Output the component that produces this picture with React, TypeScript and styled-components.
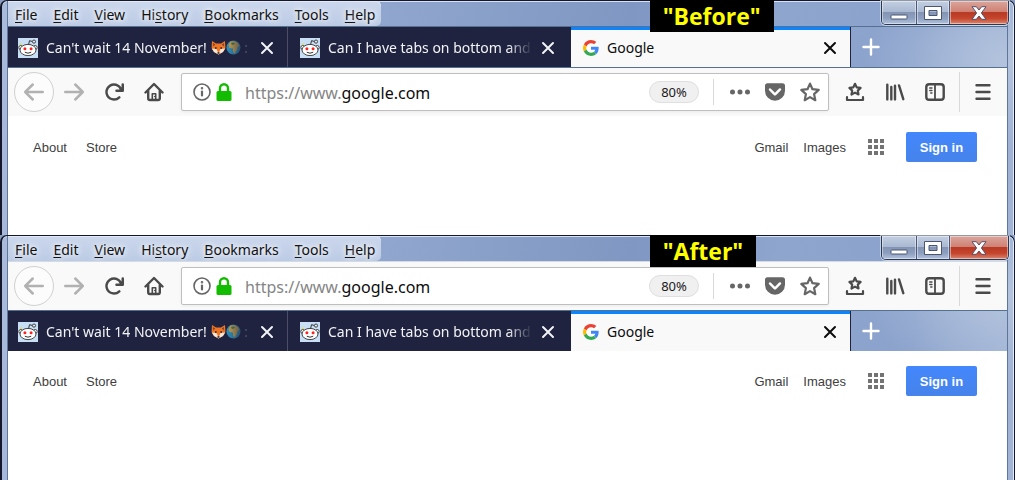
import React from "react";
import styled, { createGlobalStyle, css } from "styled-components";

const ui = `"Noto Sans", "Open Sans", sans-serif`;
const web = `"Liberation Sans", Arial, sans-serif`;

const GlobalStyle = createGlobalStyle`
  *, *::before, *::after { box-sizing: border-box; }
  html, body { margin: 0; padding: 0; height: 100%; background: #fff; }
  body { overflow: hidden; font-family: ${ui}; }
  #root { height: 100%; }
  button, input { font: inherit; margin: 0; }
`;

const Page = styled.main`
  display: flex;
  flex-direction: column;
  min-height: 100%;
  background: #8a9cc0;
`;

const Window = styled.section<{ $grow?: boolean }>`
  position: relative;
  flex: ${(p) => (p.$grow ? "1 0 auto" : "none")};
  display: flex;
  flex-direction: column;
  padding: 0 6px 0 5px;
  border: solid #14182a;
  border-width: 1px 1px 0 2px;
  border-radius: 7px 7px 0 0;
  background:
    radial-gradient(ellipse 150px 90px at 100% 60px, #b4c4de 0, rgba(180, 196, 222, 0) 100%),
    linear-gradient(100deg, #a9badb 0, #8fa5cd 38%, #7f97c2 60%, #8ea5ce 74%, #8ba2cc 88%, #a3b5d6 100%);
  box-shadow: inset 0 1px 0 #d8e1f1, inset -1px 0 0 #e4ebf6;
`;

const Client = styled.div`
  flex: 1 0 auto;
  display: flex;
  flex-direction: column;
  border: solid #5d7699;
  border-width: 0 1px;
`;

const Caption = styled.h2`
  position: absolute;
  top: -1px;
  left: 64%;
  z-index: 2;
  margin: 0;
  height: 32px;
  padding: 0 13px;
  background: #000;
  color: #ff0;
  font: 700 23px/32px "Open Sans", sans-serif;
`;

const TitleBar = styled.header`
  display: flex;
  justify-content: space-between;
  align-items: flex-start;
  height: 25px;
`;

const MenuBar = styled.nav`
  display: flex;
  align-items: center;
  gap: 16px;
  height: 25px;
  padding: 2px 6px 0 7px;
  border-radius: 0 5px 5px 0;
  background: linear-gradient(#cbd7ec, #bccbe5);
  box-shadow: inset 0 1px 0 #e3eaf6;
`;

const MenuItem = styled.button`
  padding: 0;
  border: 0;
  background: none;
  color: #101010;
  font-size: 14px;
  line-height: 20px;
  text-shadow: 0 0 5px #fff, 0 0 8px #fff;
  u { text-underline-offset: 2px; }
`;

const CaptionButtons = styled.div`
  display: flex;
  height: 24px;
  margin-right: -2px;
  border: 1px solid #2c3850;
  border-top: 0;
  border-radius: 0 0 5px 5px;
  overflow: hidden;
  box-shadow: 0 0 0 1px rgba(230, 238, 250, 0.6);
`;

const CaptionButton = styled.button<{ $close?: boolean }>`
  display: grid;
  place-items: center;
  width: ${(p) => (p.$close ? "59px" : "33px")};
  padding: 0;
  border: 0;
  border-left: 1px solid #4a5977;
  box-shadow: inset 0 0 0 1px rgba(255, 255, 255, 0.45);
  background: ${(p) =>
    p.$close
      ? "linear-gradient(#dba59c 0, #cf8274 46%, #b93a25 50%, #c4452b 75%, #d98672 100%)"
      : "linear-gradient(#c3cfe2 0, #aab9d2 46%, #8494b3 50%, #8d9fc0 75%, #b3c2dc 100%)"};
  &:first-child { border-left: 0; width: 34px; }
`;

const Divider = styled.div<{ $light?: boolean }>`
  height: 1px;
  background: ${(p) => (p.$light ? "#d5dbe3" : "#56708f")};
`;

const TabStrip = styled.div`
  display: flex;
  height: 40px;
`;

const Tab = styled.div<{ $active?: boolean; $first?: boolean }>`
  display: flex;
  align-items: center;
  flex: 0 1 ${(p) => (p.$first || p.$active ? "280px" : "283px")};
  min-width: 0;
  padding: 1px ${(p) => (p.$first || p.$active ? "12px" : "15px")} 0 ${(p) => (p.$first ? "10px" : "12px")};
  background: #20233f;
  color: #f2f3f7;
  ${(p) => p.$first && css`border-right: 1px solid #4c4e66;`}
  ${(p) =>
    p.$active &&
    css`
      background: #f9f9fa;
      color: #0c0c0d;
      border-right: 1px solid #20233f;
      box-shadow: inset 0 3px 0 #0a84ff;
    `}
`;

const TabLabel = styled.button`
  display: flex;
  align-items: center;
  flex: 1;
  min-width: 0;
  gap: 8px;
  padding: 0;
  border: 0;
  background: none;
  color: inherit;
  font-size: 14px;
  line-height: 22px;
`;

const TabTitle = styled.span<{ $fade?: boolean }>`
  flex: 1;
  display: flex;
  align-items: center;
  min-width: 0;
  overflow: hidden;
  white-space: pre;
  text-align: left;
  ${(p) => p.$fade && css`mask-image: linear-gradient(to left, transparent 0, #000 24px);`}
`;

const TabClose = styled.button`
  display: grid;
  place-items: center;
  width: 16px;
  height: 16px;
  margin-left: 8px;
  padding: 0;
  border: 0;
  background: none;
  color: inherit;
`;

const NewTab = styled.button`
  display: grid;
  place-items: center;
  width: 40px;
  padding: 0;
  border: 0;
  background: none;
  color: #fff;
`;

const Toolbar = styled.div`
  display: flex;
  align-items: center;
  height: 48px;
  padding: 0 4px 0 6px;
  background: #f9f9fa;
  color: #4a4a4b;
`;

const ToolButton = styled.button<{ $round?: boolean; $dim?: boolean }>`
  display: grid;
  place-items: center;
  flex: none;
  width: 40px;
  height: 40px;
  padding: 0;
  border: ${(p) => (p.$round ? "1px solid #d0d0d1" : "0")};
  border-radius: ${(p) => (p.$round ? "50%" : "2px")};
  background: ${(p) => (p.$round ? "#fcfcfc" : "none")};
  color: ${(p) => (p.$dim ? "#b1b1b2" : "inherit")};
`;

const AddressBar = styled.form`
  display: flex;
  align-items: center;
  flex: 1;
  min-width: 0;
  height: 38px;
  margin: 0 6px 0 7px;
  padding: 0 1px 0 9px;
  border: 1px solid #bfbfc0;
  border-radius: 2px;
  background: #fff;
  box-shadow: 0 1px 3px rgba(0, 0, 0, 0.06);
  color: #666;
`;

const AddressButton = styled.button<{ $wide?: boolean }>`
  display: grid;
  place-items: center;
  width: ${(p) => (p.$wide ? "35px" : "22px")};
  height: 30px;
  padding: 0;
  border: 0;
  background: none;
  color: inherit;
`;

const Url = styled.div`
  flex: 1;
  min-width: 0;
  padding: 2px 0 0 10px;
  overflow: hidden;
  white-space: nowrap;
  color: #858585;
  font-size: 16px;
  line-height: 24px;
  b { font-weight: 400; color: #0c0c0d; }
`;

const Zoom = styled.button`
  width: 50px;
  height: 22px;
  padding: 0;
  border: 1px solid #dfdfe0;
  border-radius: 11px;
  background: #f0f0f1;
  color: #1a1a1b;
  font-size: 13px;
  line-height: 20px;
`;

const Rule = styled.span<{ $tall?: boolean }>`
  flex: none;
  width: 1px;
  height: ${(p) => (p.$tall ? "40px" : "26px")};
  margin: ${(p) => (p.$tall ? "0 3px 0 4px" : "0 8px 0 14px")};
  background: #d9d9da;
`;

const Content = styled.div<{ $short?: boolean }>`
  flex: 1 0 auto;
  display: flex;
  align-items: flex-start;
  justify-content: space-between;
  min-height: ${(p) => (p.$short ? "119px" : "129px")};
  padding: ${(p) => (p.$short ? "16px" : "15px")} 30px 0 25px;
  background: #fff;
`;

const Links = styled.div`
  display: flex;
  align-items: center;
  gap: 19px;
  height: 30px;
`;

const Account = styled(Links)`
  gap: 15px;
`;

const PageLink = styled.a`
  padding-top: 2px;
  color: #404040;
  font: 13px/16px ${web};
  text-decoration: none;
`;

const Apps = styled.button`
  display: grid;
  place-items: center;
  width: 16px;
  height: 16px;
  margin: 0 7px;
  padding: 0;
  border: 0;
  background: none;
  color: #737373;
`;

const SignIn = styled.a`
  width: 71px;
  height: 30px;
  border-radius: 2px;
  background: linear-gradient(#4387fd, #4683ea);
  color: #fff;
  font: 700 13px/32px ${web};
  text-align: center;
  text-decoration: none;
`;

const Favicon = styled.svg`
  flex: none;
  display: block;
`;

const Icon = ({ d, size = 20 }: { d: string; size?: number }) => (
  <svg width={size} height={size} viewBox="0 0 16 16" fill="currentColor" aria-hidden="true">
    <path fillRule="evenodd" d={d} />
  </svg>
);

const paths = {
  back: "M15 7H3.414l4.293-4.293a1 1 0 0 0-1.414-1.414l-6 6a1 1 0 0 0 0 1.414l6 6a1 1 0 0 0 1.414-1.414L3.414 9H15a1 1 0 0 0 0-2z",
  forward: "M1 7h11.586L8.293 2.707a1 1 0 0 1 1.414-1.414l6 6a1 1 0 0 1 0 1.414l-6 6a1 1 0 0 1-1.414-1.414L12.586 9H1a1 1 0 0 1 0-2z",
  reload: "M15 1a1 1 0 0 0-1 1v2.418A6.995 6.995 0 1 0 8 15a6.954 6.954 0 0 0 4.95-2.05 1 1 0 0 0-1.414-1.414A5.019 5.019 0 1 1 12.549 6H10a1 1 0 0 0 0 2h5a1 1 0 0 0 1-1V2a1 1 0 0 0-1-1z",
  pocket: "M8 15a8 8 0 0 1-8-8V3a2 2 0 0 1 2-2h12a2 2 0 0 1 2 2v4a8 8 0 0 1-8 8zm3.985-10.032a.99.99 0 0 0-.725.319L7.978 8.57 4.755 5.336A.984.984 0 0 0 4 4.968a1 1 0 0 0-.714 1.7l-.016.011 3.293 3.306.707.707a1 1 0 0 0 1.414 0l.707-.707L12.7 6.679a1 1 0 0 0-.715-1.711z",
  dots: "M2 6a2 2 0 1 0 0 4 2 2 0 0 0 0-4zM8 6a2 2 0 1 0 0 4 2 2 0 0 0 0-4zM14 6a2 2 0 1 0 0 4 2 2 0 0 0 0-4z",
};

const Line = ({ children, size = 20, w = 2 }: { children: React.ReactNode; size?: number; w?: number }) => (
  <svg
    width={size}
    height={size}
    viewBox={`0 0 ${size} ${size}`}
    fill="none"
    stroke="currentColor"
    strokeWidth={w}
    strokeLinecap="round"
    strokeLinejoin="round"
    aria-hidden="true"
  >
    {children}
  </svg>
);

const HomeIcon = () => (
  <Line w={2.4}>
    <path d="M1.500 10.500L10 2l8.500 8.500" />
    <path d="M4.200 9v7.300a1.700 1.700 0 0 0 1.700 1.700h8.200a1.700 1.700 0 0 0 1.700-1.700V9" />
    <path d="M8.300 17v-5.200h3.400V17" strokeWidth="1.600" />
    <path d="M10.500 14.500h.4" strokeWidth="1.200" />
  </Line>
);

const InfoIcon = () => (
  <Line size={18} w={1.6}>
    <circle cx="9" cy="9" r="8" />
    <path d="M9 8.500v4" strokeWidth="2.200" />
    <circle cx="9" cy="5.300" r="0.500" />
  </Line>
);

const LockIcon = () => (
  <svg width="16" height="18" viewBox="0 0 16 18" aria-hidden="true">
    <path d="M4 9V5.200a4 4 0 0 1 8 0V9" fill="none" stroke="#12bc00" strokeWidth="2.400" />
    <rect x="0.500" y="8" width="15" height="10" rx="1.500" fill="#12bc00" />
  </svg>
);

const StarIcon = () => (
  <Line w={2.2}>
    <path d="M10 1.600l2.500 5.600 6.200.7-4.600 4.200 1.200 6.100-5.300-3.100-5.300 3.100 1.200-6.100-4.600-4.200 6.200-.7z" />
  </Line>
);

const StarTrayIcon = () => (
  <Line>
    <path d="M10 1.800l1.700 3.600 3.900.5-2.800 2.700.7 3.900L10 10.600l-3.500 1.900.7-3.900-2.800-2.700 3.900-.5z" strokeWidth="2.200" />
    <path d="M2 15.200V18h16v-2.800" strokeWidth="2.200" />
  </Line>
);

const LibraryIcon = () => (
  <Line w={2.4}>
    <path d="M2.300 2.600v14.800M6.300 5v12.400M10 3.600v13.800M14 3.400l4.300 13.800" />
  </Line>
);

const SidebarIcon = () => (
  <Line w={2.4}>
    <rect x="1.300" y="2.200" width="17.400" height="15.600" rx="2.800" />
    <path d="M10 2.500v15" strokeWidth="1.800" />
    <path d="M4.700 6h2.300M4.700 8.500h2.300M5.700 11h1.300" strokeWidth="1.300" />
  </Line>
);

const MenuIcon = () => (
  <Line w={2.4}>
    <path d="M3.500 3.200h13M3.500 10h13M3.500 16.800h13" />
  </Line>
);

const CloseIcon = () => (
  <Line size={16}>
    <path d="M3 3l10 10M13 3L3 13" />
  </Line>
);

const PlusIcon = () => (
  <Line size={18} w={2.4}>
    <path d="M9 1.500v15M1.500 9h15" />
  </Line>
);

const RedditIcon = () => (
  <Favicon width="20" height="20" viewBox="0 0 20 20" aria-hidden="true">
    <rect width="20" height="20" fill="#c7def4" />
    <path d="M10.500 7l1-4.300 3 .8" fill="none" stroke="#333" strokeWidth="1" />
    <circle cx="16" cy="3.600" r="1.600" fill="#dfeaf6" stroke="#333" strokeWidth="0.900" />
    <circle cx="2.800" cy="9.500" r="2" fill="#fff" stroke="#333" strokeWidth="0.900" />
    <circle cx="17.200" cy="9.500" r="2" fill="#fff" stroke="#333" strokeWidth="0.900" />
    <ellipse cx="10" cy="12" rx="8" ry="5.600" fill="#fff" stroke="#333" strokeWidth="0.900" />
    <circle cx="6.900" cy="10.800" r="1.500" fill="#f22" />
    <circle cx="13.100" cy="10.800" r="1.500" fill="#f22" />
    <path d="M6.800 14.200q3.200 2 6.400 0" fill="none" stroke="#333" />
    <rect x="2" y="5.500" width="1.500" height="1.500" fill="#e8e020" />
  </Favicon>
);

const GoogleIcon = () => (
  <Favicon width="16" height="16" viewBox="0 0 48 48" aria-hidden="true">
    <circle cx="24" cy="24" r="24" fill="#fff" />
    <path fill="#EA4335" d="M24 9.500c3.540 0 6.710 1.220 9.210 3.600l6.850-6.850C35.900 2.380 30.470 0 24 0 14.620 0 6.510 5.380 2.560 13.220l7.980 6.190C12.430 13.720 17.740 9.500 24 9.500z" />
    <path fill="#4285F4" d="M46.980 24.550c0-1.570-.15-3.090-.38-4.550H24v9.020h12.940c-.58 2.960-2.260 5.480-4.780 7.180l7.730 6c4.510-4.180 7.090-10.360 7.090-17.650z" />
    <path fill="#FBBC05" d="M10.530 28.590c-.48-1.450-.76-2.990-.76-4.590s.27-3.140.76-4.590l-7.980-6.190C.92 16.460 0 20.120 0 24c0 3.880.92 7.540 2.560 10.780l7.970-6.190z" />
    <path fill="#34A853" d="M24 48c6.480 0 11.930-2.130 15.890-5.810l-7.730-6c-2.150 1.450-4.920 2.300-8.160 2.300-6.260 0-11.570-4.220-13.470-9.910l-7.980 6.190C6.510 42.620 14.620 48 24 48z" />
  </Favicon>
);

const FoxIcon = () => (
  <Favicon width="15" height="15" viewBox="0 0 15 15" aria-label="fox" role="img">
    <path d="M1 1l4 2.500h5L14 1l.4 7L12 12l-4.500 2.500L3 12 .6 8z" fill="#ef7424" />
    <path d="M2 3l2 1.500-1.500 2zM13 3l-2 1.500 1.500 2z" fill="#6b3a25" />
    <path d="M.8 8.500L5.500 9l2 4.500L9.500 9l4.700-.5L12 12l-4.500 2.500L3 12z" fill="#f6e6d8" />
    <path d="M4 7.200h1.600v1.500H4zM9.400 7.200H11v1.500H9.400zM6.500 12.200h2v1.500h-2z" fill="#222" />
  </Favicon>
);

const GlobeIcon = () => (
  <Favicon width="15" height="15" viewBox="0 0 15 15" aria-label="globe" role="img">
    <circle cx="7.500" cy="7.500" r="7" fill="#2f8fb8" />
    <path d="M4 1.500l4-.5 4 2 1.500 3-2 1L11 9.500 8.500 13.500 7 11.500V8.500L3.500 8 2.500 5z" fill="#c0a052" />
    <path d="M5 3l3-.5 1 1.500-3 1z" fill="#3e7d55" />
  </Favicon>
);

const MinimizeIcon = () => (
  <svg width="18" height="14" viewBox="0 0 18 14" aria-hidden="true">
    <rect x="1" y="9" width="16" height="4" rx="0.500" fill="#fff" stroke="#4b5670" />
  </svg>
);

const MaximizeIcon = () => (
  <svg width="18" height="14" viewBox="0 0 18 14" aria-hidden="true">
    <path fillRule="evenodd" d="M.5.5h17v13H.5zM5 4.500h8v5H5z" fill="#fff" stroke="#4b5670" />
  </svg>
);

const CloseWindowIcon = () => (
  <svg width="16" height="14" viewBox="0 0 16 14" aria-hidden="true">
    <path d="M1 .7h4.300L8 4 10.700.7H15L10.400 7l4.600 6.300h-4.300L8 10l-2.700 3.300H1L5.600 7z" fill="#fff" stroke="#54506a" />
  </svg>
);

const menus: [string, string, string][] = [
  ["", "F", "ile"],
  ["", "E", "dit"],
  ["", "V", "iew"],
  ["Hi", "s", "tory"],
  ["", "B", "ookmarks"],
  ["", "T", "ools"],
  ["", "H", "elp"],
];

const Title = () => (
  <TitleBar>
    <MenuBar aria-label="Application menu">
      {menus.map(([pre, key, post]) => (
        <MenuItem key={post} type="button">
          {pre}
          <u>{key}</u>
          {post}
        </MenuItem>
      ))}
    </MenuBar>
    <CaptionButtons>
      <CaptionButton type="button" aria-label="Minimize"><MinimizeIcon /></CaptionButton>
      <CaptionButton type="button" aria-label="Maximize"><MaximizeIcon /></CaptionButton>
      <CaptionButton type="button" aria-label="Close window" $close><CloseWindowIcon /></CaptionButton>
    </CaptionButtons>
  </TitleBar>
);

const Tabs = () => (
  <TabStrip>
    <Tab $first>
      <TabLabel type="button">
        <RedditIcon />
        <TabTitle $fade>Can't wait 14 November! <FoxIcon /><GlobeIcon /> :</TabTitle>
      </TabLabel>
      <TabClose type="button" aria-label="Close tab"><CloseIcon /></TabClose>
    </Tab>
    <Tab>
      <TabLabel type="button">
        <RedditIcon />
        <TabTitle $fade>Can I have tabs on bottom and</TabTitle>
      </TabLabel>
      <TabClose type="button" aria-label="Close tab"><CloseIcon /></TabClose>
    </Tab>
    <Tab $active>
      <TabLabel type="button">
        <GoogleIcon />
        <TabTitle>Google</TabTitle>
      </TabLabel>
      <TabClose type="button" aria-label="Close tab"><CloseIcon /></TabClose>
    </Tab>
    <NewTab type="button" aria-label="New tab"><PlusIcon /></NewTab>
  </TabStrip>
);

const Navigation = () => (
  <Toolbar>
    <ToolButton type="button" aria-label="Back" $round $dim><Icon d={paths.back} /></ToolButton>
    <ToolButton type="button" aria-label="Forward" $dim><Icon d={paths.forward} /></ToolButton>
    <ToolButton type="button" aria-label="Reload"><Icon d={paths.reload} /></ToolButton>
    <ToolButton type="button" aria-label="Home"><HomeIcon /></ToolButton>
    <AddressBar onSubmit={(e) => e.preventDefault()}>
      <AddressButton type="button" aria-label="Site information"><InfoIcon /></AddressButton>
      <AddressButton type="button" aria-label="Secure connection"><LockIcon /></AddressButton>
      <Url role="textbox" aria-label="Address" contentEditable suppressContentEditableWarning spellCheck={false}>
        https://www.<b>google.com</b>
      </Url>
      <Zoom type="button">80%</Zoom>
      <Rule />
      <AddressButton type="button" aria-label="Page actions" $wide><Icon d={paths.dots} /></AddressButton>
      <AddressButton type="button" aria-label="Save to Pocket" $wide><Icon d={paths.pocket} /></AddressButton>
      <AddressButton type="button" aria-label="Bookmark this page" $wide><StarIcon /></AddressButton>
    </AddressBar>
    <ToolButton type="button" aria-label="Bookmarks"><StarTrayIcon /></ToolButton>
    <ToolButton type="button" aria-label="Library"><LibraryIcon /></ToolButton>
    <ToolButton type="button" aria-label="Sidebars"><SidebarIcon /></ToolButton>
    <Rule $tall />
    <ToolButton type="button" aria-label="Open menu"><MenuIcon /></ToolButton>
  </Toolbar>
);

const GooglePage = ({ short }: { short?: boolean }) => (
  <Content $short={short}>
    <Links>
      <PageLink href="#about">About</PageLink>
      <PageLink href="#store">Store</PageLink>
    </Links>
    <Account>
      <PageLink href="#gmail">Gmail</PageLink>
      <PageLink href="#images">Images</PageLink>
      <Apps type="button" aria-label="Google apps">
        <svg width="16" height="16" viewBox="0 0 16 16" fill="currentColor" aria-hidden="true">
          {[0, 6, 12].map((y) => [0, 6, 12].map((x) => <rect key={`${x}-${y}`} x={x} y={y} width="4" height="4" />))}
        </svg>
      </Apps>
      <SignIn href="#signin">Sign in</SignIn>
    </Account>
  </Content>
);

export default function App() {
  return (
    <>
      <GlobalStyle />
      <Page>
        <Window>
          <Caption>"Before"</Caption>
          <Client>
            <Title />
            <Divider />
            <Tabs />
            <Divider />
            <Navigation />
            <GooglePage short />
          </Client>
        </Window>
        <Window $grow>
          <Caption>"After"</Caption>
          <Client>
            <Title />
            <Divider $light />
            <Navigation />
            <Divider />
            <Tabs />
            <GooglePage />
          </Client>
        </Window>
      </Page>
    </>
  );
}
